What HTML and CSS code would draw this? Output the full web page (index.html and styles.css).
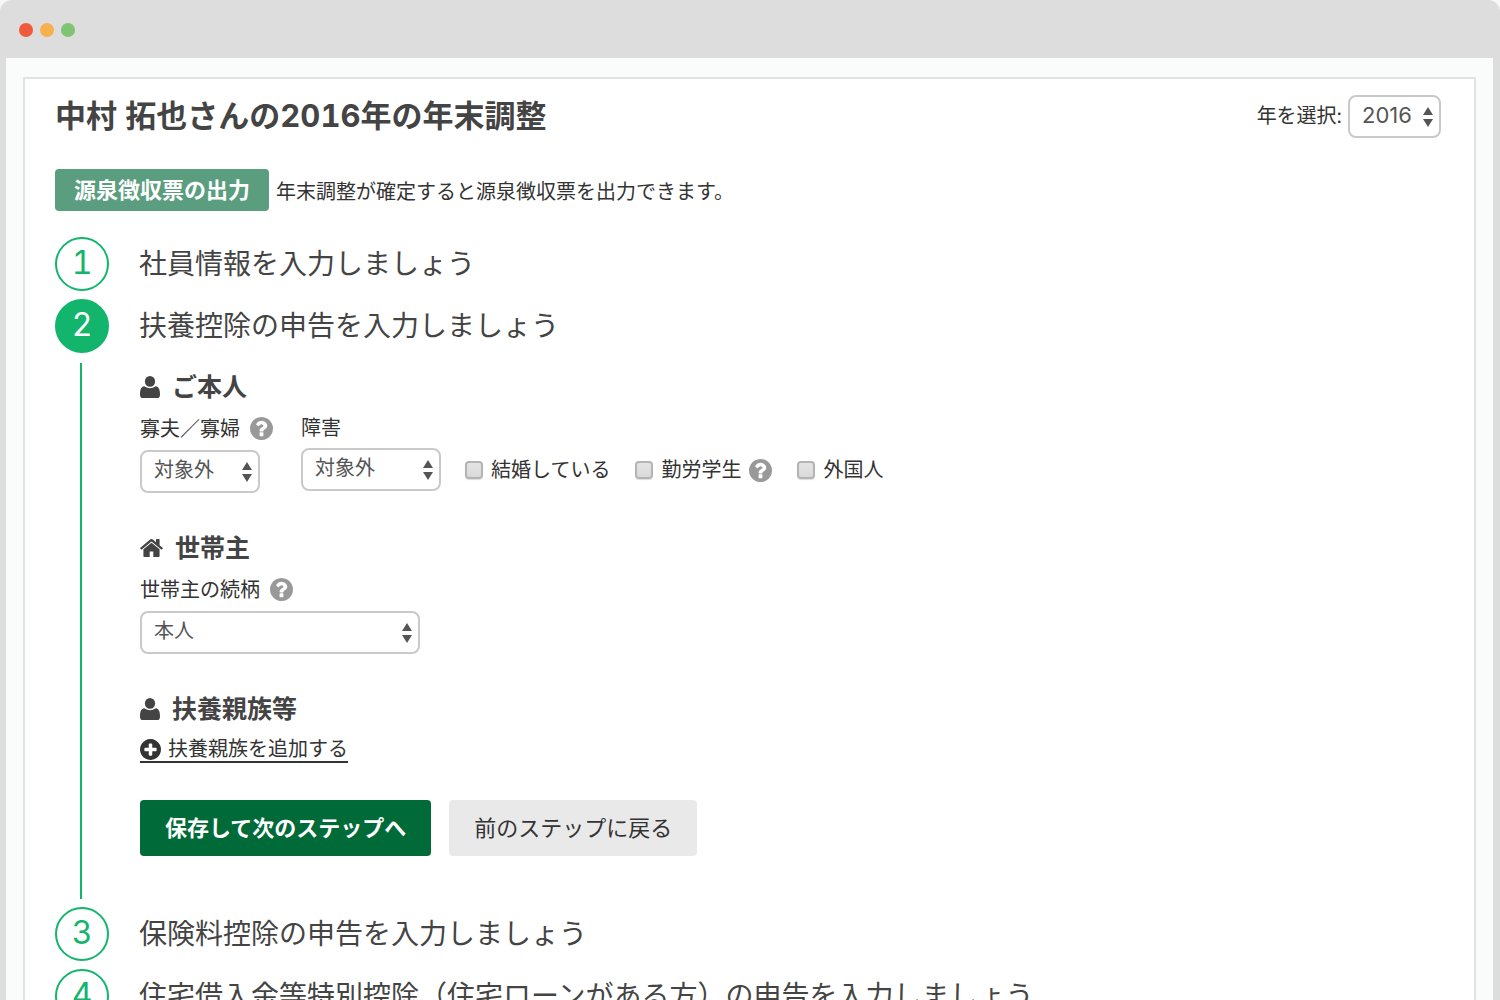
FILE: index.html
```html
<!DOCTYPE html>
<html lang="ja">
<head>
  <meta charset="UTF-8" />
  <meta name="viewport" content="width=device-width, initial-scale=1.0" />
  <title>年末調整</title>
  <link rel="stylesheet" href="styles.css">
</head>
<body>

  <svg class="sprite" aria-hidden="true">
    <symbol id="icon-user" viewBox="0 0 20 22">
      <ellipse cx="10" cy="5.4" rx="5.1" ry="5.4" />
      <path d="M4.2 10.2Q10 14.4 15.8 10.2C18.8 10.6 20 13.6 20 18.4Q20 22 17.2 22H2.8Q0 22 0 18.4C0 13.6 1.2 10.6 4.2 10.2z" />
    </symbol>
    <symbol id="icon-home" viewBox="89 253 1614 1283">
      <path d="M1472 992v480q0 26-19 45t-45 19h-384v-384h-256v384h-384q-26 0-45-19t-19-45v-480q0-1 .5-3t.5-3l575-474 575 474q1 2 1 6zm223-69l-62 74q-8 9-21 11h-3q-13 0-21-7l-692-577-692 577q-12 8-24 7-13-2-21-11l-62-74q-8-10-7-23.5t11-21.5l719-599q32-26 76-26t76 26l244 204v-195q0-14 9-23t23-9h192q14 0 23 9t9 23v408l219 182q10 8 11 21.5t-7 23.5z" />
    </symbol>
    <symbol id="icon-question" viewBox="128 128 1536 1536">
      <path d="M1024 1376v-192q0-14-9-23t-23-9h-192q-14 0-23 9t-9 23v192q0 14 9 23t23 9h192q14 0 23-9t9-23zm256-672q0-88-55.5-163t-138.5-116-170-41q-243 0-371 213-15 24 8 42l132 100q7 6 19 6 16 0 25-12 53-68 86-92 34-24 86-24 48 0 85.5 26t37.5 59q0 38-20 61t-68 45q-63 28-115.5 86.5t-52.5 125.5v36q0 14 9 23t23 9h192q14 0 23-9t9-23q0-19 21.5-49.5t54.5-49.5q32-18 49-28.5t46-35 44.5-48 28-60.5 12.5-81zm384 192q0 209-103 385.5t-279.5 279.5-385.5 103-385.5-103-279.5-279.5-103-385.5 103-385.5 279.5-279.5 385.5-103 385.5 103 279.5 279.5 103 385.5z" />
    </symbol>
    <symbol id="icon-plus" viewBox="128 128 1536 1536">
      <path d="M1344 960v-128q0-26-19-45t-45-19h-256v-256q0-26-19-45t-45-19h-128q-26 0-45 19t-19 45v256h-256q-26 0-45 19t-19 45v128q0 26 19 45t45 19h256v256q0 26 19 45t45 19h128q26 0 45-19t19-45v-256h256q26 0 45-19t19-45zm320-64q0 209-103 385.5t-279.5 279.5-385.5 103-385.5-103-279.5-279.5-103-385.5 103-385.5 279.5-279.5 385.5-103 385.5 103 279.5 279.5 103 385.5z" />
    </symbol>
  </svg>

  <div class="window">
    <div class="titlebar">
      <span class="dot red"></span>
      <span class="dot yellow"></span>
      <span class="dot green"></span>
    </div>

    <div class="viewport">
      <main class="card">
        <header class="page-header">
          <h1>中村 拓也さんの2016年の年末調整</h1>
          <div class="year">
            <label for="year">年を選択:</label>
            <select id="year" class="select select-year">
              <option>2016</option>
              <option>2015</option>
            </select>
          </div>
        </header>

        <div class="export">
          <button type="button" class="btn-export">源泉徴収票の出力</button>
          <span>年末調整が確定すると源泉徴収票を出力できます。</span>
        </div>

        <section class="step">
          <div class="step-head">
            <span class="number">1</span>
            <h2>社員情報を入力しましょう</h2>
          </div>
        </section>

        <section class="step">
          <div class="step-head">
            <span class="number active">2</span>
            <h2>扶養控除の申告を入力しましょう</h2>
          </div>

          <form class="step-body">
            <div class="group">
              <h3><svg class="icon-user"><use href="#icon-user" /></svg>ご本人</h3>
              <div class="fields">
                <div class="field with-help">
                  <div class="field-label">
                    <label for="widow">寡夫／寡婦</label>
                    <svg class="help"><use href="#icon-question" /></svg>
                  </div>
                  <select id="widow" class="select select-small">
                    <option>対象外</option>
                  </select>
                </div>
                <div class="field">
                  <div class="field-label plain">
                    <label for="disability">障害</label>
                  </div>
                  <select id="disability" class="select select-medium">
                    <option>対象外</option>
                  </select>
                </div>
                <div class="checks">
                  <div class="check">
                    <input type="checkbox" id="married">
                    <label for="married">結婚している</label>
                  </div>
                  <div class="check">
                    <input type="checkbox" id="student">
                    <label for="student">勤労学生</label>
                    <svg class="help"><use href="#icon-question" /></svg>
                  </div>
                  <div class="check">
                    <input type="checkbox" id="foreigner">
                    <label for="foreigner">外国人</label>
                  </div>
                </div>
              </div>
            </div>

            <div class="group">
              <h3><svg class="icon-home"><use href="#icon-home" /></svg>世帯主</h3>
              <div class="field">
                <div class="field-label">
                  <label for="relation">世帯主の続柄</label>
                  <svg class="help"><use href="#icon-question" /></svg>
                </div>
                <select id="relation" class="select select-large">
                  <option>本人</option>
                </select>
              </div>
            </div>

            <div class="group">
              <h3><svg class="icon-user"><use href="#icon-user" /></svg>扶養親族等</h3>
              <a href="#" class="add-link"><svg class="icon-plus"><use href="#icon-plus" /></svg>扶養親族を追加する</a>
            </div>

            <div class="buttons">
              <button type="button" class="btn btn-save">保存して次のステップへ</button>
              <button type="button" class="btn btn-back">前のステップに戻る</button>
            </div>
          </form>
        </section>

        <section class="step">
          <div class="step-head">
            <span class="number">3</span>
            <h2>保険料控除の申告を入力しましょう</h2>
          </div>
        </section>

        <section class="step">
          <div class="step-head">
            <span class="number">4</span>
            <h2>住宅借入金等特別控除（住宅ローンがある方）の申告を入力しましょう</h2>
          </div>
        </section>
      </main>
    </div>
  </div>

</body>
</html>
```
FILE: styles.css
```css
* {
  box-sizing: border-box;
}

body {
  margin: 0;
  background: #f6f7f6;
  color: #333;
  font-family: Inter, "Noto Sans CJK JP", sans-serif;
  font-size: 20px;
  font-variant-numeric: tabular-nums;
}

h1, h2, h3 {
  margin: 0;
  color: #444;
}

svg {
  flex: none;
  fill: currentColor;
}

button, select {
  font-family: inherit;
}

.sprite {
  display: none;
}

/* window frame */
.window {
  height: 100vh;
  overflow: hidden;
  background: #ddd;
  border-radius: 12px 12px 0 0;
  padding: 0 7px 0 6px;
}

.titlebar {
  display: flex;
  align-items: center;
  gap: 7px;
  height: 58px;
  padding: 2px 13px 0;
}

.dot {
  width: 14px;
  height: 14px;
  border-radius: 50%;
}

.red { background: #f05a3c; }
.yellow { background: #f6b04e; }
.green { background: #7fc472; }

.viewport {
  background: #fafcfb;
  padding: 19px 17px 0;
}

.card {
  background: #fff;
  border: 2px solid #e2e2e2;
  padding: 16px 33px 40px 30px;
}

.page-header {
  display: flex;
  justify-content: space-between;
  align-items: center;
  height: 43px;
}

h1 {
  font-size: 31px;
  line-height: 40px;
  padding-bottom: 2px;
}

.year {
  display: flex;
  align-items: center;
  gap: 6px;
}

.year label {
  padding-bottom: 4px;
}

/* selects */
.select {
  appearance: none;
  display: block;
  height: 43px;
  padding: 0 24px 4px 12px;
  border: 2px solid #c9c9c9;
  border-radius: 8px;
  background: #fff url("data:image/svg+xml,%3Csvg xmlns='http://www.w3.org/2000/svg' width='10' height='20'%3E%3Cpath d='M5 0l5 8H0zM5 20l5-8H0z' fill='%23555'/%3E%3C/svg%3E") no-repeat right 6px center;
  color: #555;
  font-size: 20px;
}

.select-year { width: 93px; font-size: 22px; }
.select-small { width: 120px; }
.select-medium { width: 140px; }
.select-large { width: 280px; }

.export {
  display: flex;
  align-items: center;
  gap: 7px;
  margin: 31px 0 26px;
}

.btn-export {
  height: 42px;
  padding: 0 19px 4px;
  border: 0;
  border-radius: 4px;
  background: #5b9e7f;
  color: #fff;
  font-size: 22px;
  font-weight: bold;
}

/* steps */
.step {
  margin-bottom: 8px;
}

.step-head {
  display: flex;
  align-items: center;
  gap: 30px;
}

.number {
  flex: none;
  width: 54px;
  height: 54px;
  border: 2px solid #12b56b;
  border-radius: 50%;
  color: #12b56b;
  font-size: 32px;
  line-height: 48px;
  text-align: center;
}

.number.active {
  background: #12b56b;
  color: #fff;
}

h2 {
  font-size: 28px;
  font-weight: normal;
  line-height: 40px;
}

.step-body {
  margin: 10px 0 0 25px;
  padding: 4px 0 43px 58px;
  border-left: 2px solid #12b56b;
}

.group {
  margin-bottom: 35px;
}

h3 {
  display: flex;
  align-items: center;
  gap: 12px;
  font-size: 25px;
  line-height: 40px;
}

.icon-user {
  width: 20px;
  height: 22px;
}

.icon-home {
  width: 23px;
  height: 18px;
}

.icon-plus {
  width: 21px;
  height: 21px;
}

.help {
  width: 23px;
  height: 23px;
  color: #999;
}

.fields {
  display: flex;
  gap: 24px;
}

.with-help {
  padding-right: 4px;
}

.field-label {
  display: flex;
  align-items: center;
  gap: 10px;
  height: 43px;
}

.field-label label {
  padding-bottom: 3px;
}

.field-label.plain {
  height: 41px;
}

.checks {
  display: flex;
  align-items: center;
  align-self: flex-end;
  gap: 25px;
  height: 46px;
}

.check {
  display: flex;
  align-items: center;
  gap: 8px;
}

.check label {
  padding-bottom: 4px;
}

.check input {
  appearance: none;
  width: 18px;
  height: 18px;
  margin: 0;
  border: 2px solid #b4b4b4;
  border-radius: 4px;
  background: linear-gradient(#e4e4e4, #dadada);
  box-shadow: 0 1px 1px #ddd;
}

.add-link {
  display: inline-flex;
  align-items: center;
  gap: 7px;
  margin: 8px 0 2px;
  border-bottom: 2px solid #333;
  color: #333;
  line-height: 24px;
  text-decoration: none;
}

.buttons {
  display: flex;
  gap: 18px;
}

.btn {
  height: 56px;
  padding: 0 25px 5px;
  border: 0;
  border-radius: 4px;
  font-size: 22px;
}

.btn-save {
  background: #006a38;
  color: #fff;
  font-weight: bold;
}

.btn-back {
  background: #e9e9e9;
  color: #333;
}
```
